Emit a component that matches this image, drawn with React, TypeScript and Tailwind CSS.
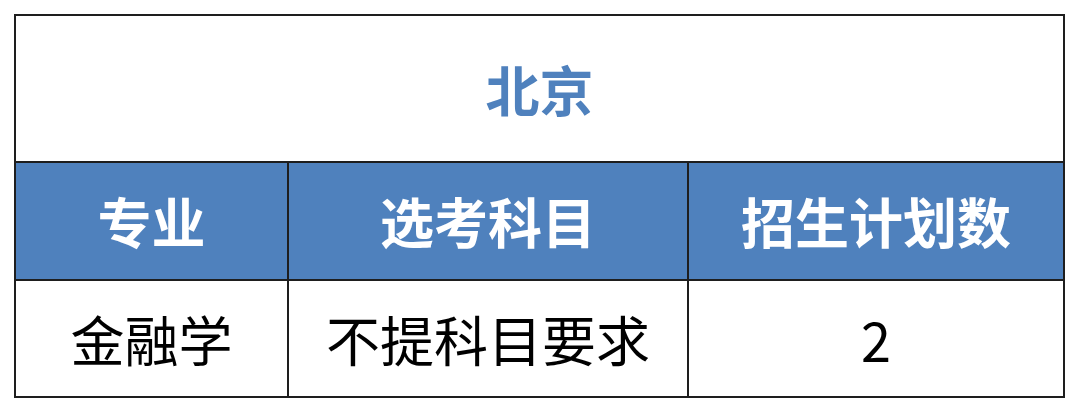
const cols = ["w-[273px] border-r-2", "w-[400px] border-r-2", "w-[374px]"];

const headers = ["专业", "选考科目", "招生计划数"];
const row = ["金融学", "不提科目要求", "2"];

export default function App() {
  return (
    <div
      className="w-[1080px] h-[413px] bg-white pt-[14px] pl-[14px]"
      style={{ fontFamily: '"Noto Sans CJK SC", "Noto Sans", sans-serif' }}
    >
      <div className="w-[1051px] h-[384px] border-2 border-[#1e1e1e] flex flex-col">
        <div className="h-[147px] border-b-2 border-[#1e1e1e] flex items-center justify-center text-[54px] font-bold text-[#4f81bd] leading-none">
          北京
        </div>
        <div className="h-[118px] border-b-2 border-[#1e1e1e] bg-[#4f81bd] flex">
          {headers.map((h, i) => (
            <div
              key={h}
              className={`${cols[i]} border-[#1e1e1e] flex items-center justify-center text-[54px] font-bold text-white leading-none`}
            >
              {h}
            </div>
          ))}
        </div>
        <div className="flex-1 flex">
          {row.map((c, i) => (
            <div
              key={c}
              className={`${cols[i]} border-[#1e1e1e] flex items-center justify-center text-[54px] text-black leading-none`}
            >
              {c}
            </div>
          ))}
        </div>
      </div>
    </div>
  );
}
